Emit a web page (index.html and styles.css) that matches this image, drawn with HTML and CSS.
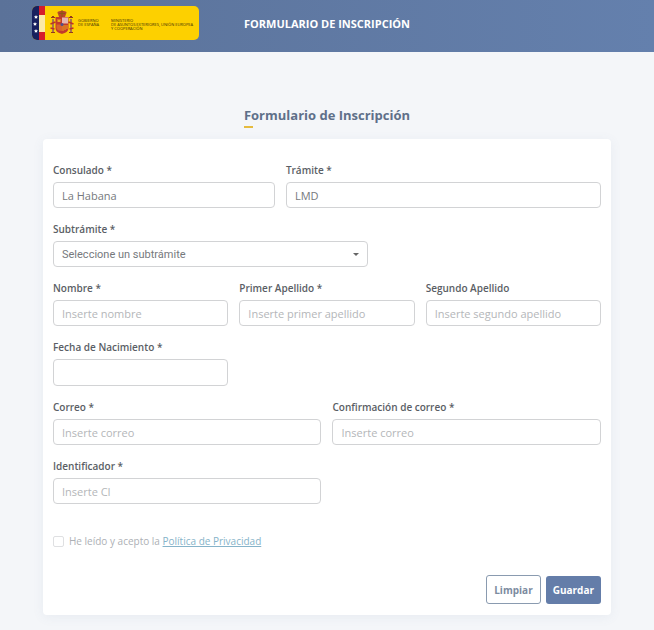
FILE: index.html
```html
<!DOCTYPE html>
<html lang="es">
<head>
    <meta charset="UTF-8">
    <meta name="viewport" content="width=device-width, initial-scale=1.0">
    <title>Formulario de Inscripción</title>
    <link rel="stylesheet" href="styles.css">
</head>

<body>
    <header class="header">
        <svg class="logo" viewBox="0 0 167 34" role="img" aria-label="Gobierno de España">
            <defs>
                <clipPath id="round"><rect width="167" height="34" rx="5"/></clipPath>
            </defs>
            <g clip-path="url(#round)">
                <rect width="167" height="34" fill="#fdd000"/>
                <rect width="7" height="34" fill="#17205e"/>
                <rect x="7" width="6" height="34" fill="#fbe9a8"/>
                <rect x="7" width="6" height="9" fill="#d51d2c"/>
                <rect x="7" y="26" width="6" height="8" fill="#d51d2c"/>
                <!-- stars -->
                <g fill="#fff">
                    <path d="M4 9l.6 1.200 1.400.2-1 1 .2 1.400L4 12.100l-1.200.7.2-1.400-1-1 1.400-.2z"/>
                    <path d="M3 16l.6 1.200 1.400.2-1 1 .2 1.400L3 19.100l-1.200.7.2-1.400-1-1 1.400-.2z"/>
                    <path d="M4 23l.6 1.200 1.400.2-1 1 .2 1.400L4 26.100l-1.200.7.2-1.400-1-1 1.400-.2z"/>
                </g>
                <!-- coat of arms -->
                <path d="M26 8c-2-3 2-3 4-3s6 0 4 3l-1 3h-6z" fill="#b9452b"/>
                <path d="M29.500 4h1v7h-1zM27 7h6v1h-6z" fill="#8a5a12"/>
                <path d="M23.500 11h13v11c0 4-4 5-6.500 6-2.500-1-6.500-2-6.500-6z" fill="#c33a2b"/>
                <path d="M30 11.500h6v6h-6z" fill="#e5b5b0"/>
                <path d="M24.500 18.500H30V25c-3 0-5.500-1-5.500-3z" fill="#d9632a"/>
                <path d="M31 19v6M33 19v5M35 19v4" stroke="#efaa20" stroke-width="1"/>
                <path d="M25.500 16v-3h1v1h1v-1h1v3z" fill="#efaa20"/>
                <circle cx="30" cy="18.500" r="1.500" fill="#4c4f8d"/>
                <path d="M20 13h2v13h-2zM38 13h2v13h-2z" fill="#a9764e"/>
                <path d="M19 12h4v-1h-1v-1h-2v1h-1zM37 12h4v-1h-1v-1h-2v1h-1zM19 26h4v1h-4zM37 26h4v1h-4z" fill="#93391c"/>
                <path d="M18.500 18l5-2M18.500 22l4 1M36.500 16l5 2M37.500 23l4-1" stroke="#bd3328" stroke-width="1.500"/>
                <g class="logo-text">
                    <text x="46" y="16">GOBIERNO</text>
                    <text x="46" y="20">DE ESPAÑA</text>
                    <text x="79" y="16">MINISTERIO</text>
                    <text x="79" y="20">DE ASUNTOS EXTERIORES, UNIÓN EUROPEA</text>
                    <text x="79" y="24">Y COOPERACIÓN</text>
                </g>
            </g>
        </svg>
        <div class="header-title">FORMULARIO DE INSCRIPCIÓN</div>
    </header>

    <main class="container">
        <h1 class="title">Formulario de Inscripción</h1>

        <form class="card">
            <div class="grid">
                <div class="field col-5">
                    <label for="consulado">Consulado *</label>
                    <input type="text" id="consulado" value="La Habana">
                </div>
                <div class="field col-7">
                    <label for="tramite">Trámite *</label>
                    <input type="text" id="tramite" value="LMD">
                </div>

                <div class="field col-7 start">
                    <label for="subtramite">Subtrámite *</label>
                    <div class="select">
                        <select id="subtramite">
                            <option>Seleccione un subtrámite</option>
                        </select>
                        <svg class="arrow" viewBox="0 0 8 4"><path d="M1 0h6L4 3z" fill="#666"/></svg>
                    </div>
                </div>

                <div class="field col-4 start">
                    <label for="nombre">Nombre *</label>
                    <input type="text" id="nombre" placeholder="Inserte nombre">
                </div>
                <div class="field col-4">
                    <label for="apellido1">Primer Apellido *</label>
                    <input type="text" id="apellido1" placeholder="Inserte primer apellido">
                </div>
                <div class="field col-4">
                    <label for="apellido2">Segundo Apellido</label>
                    <input type="text" id="apellido2" placeholder="Inserte segundo apellido">
                </div>

                <div class="field col-4 start">
                    <label for="fecha">Fecha de Nacimiento *</label>
                    <input type="text" id="fecha" class="date">
                </div>

                <div class="field col-6 start">
                    <label for="correo">Correo *</label>
                    <input type="email" id="correo" placeholder="Inserte correo">
                </div>
                <div class="field col-6">
                    <label for="correo2">Confirmación de correo *</label>
                    <input type="email" id="correo2" placeholder="Inserte correo">
                </div>

                <div class="field col-6 start">
                    <label for="ci">Identificador *</label>
                    <input type="text" id="ci" placeholder="Inserte CI">
                </div>
            </div>

            <div class="privacy">
                <input type="checkbox" id="acepto">
                <label for="acepto">He leído y acepto la <a href="#">Política de Privacidad</a></label>
            </div>

            <div class="buttons">
                <button type="reset" class="btn btn-clear">Limpiar</button>
                <button type="submit" class="btn btn-save">Guardar</button>
            </div>
        </form>
    </main>
</body>

</html>
```
FILE: styles.css
```css
* {
    margin: 0;
    padding: 0;
    box-sizing: border-box;
}

body {
    font-family: "Open Sans", "Noto Sans", sans-serif;
    font-size: 10px;
    color: #5a5e65;
    background-color: #f4f6f9;
}

.header {
    display: grid;
    grid-template-columns: 1fr auto 1fr;
    align-items: center;
    padding: 6px 32px 12px;
    background: linear-gradient(to right, #5b7299, #6480ad);
}

.logo {
    width: 167px;
    height: 34px;
}

.logo-text {
    font-family: "Open Sans", sans-serif;
    font-size: 4px;
    font-weight: 400;
    fill: #3d3208;
}

.header-title {
    font-size: 11px;
    font-weight: 700;
    color: #fff;
}

.container {
    max-width: 1140px;
    margin: 0 auto;
    padding: 53px 43px 15px;
}

.title {
    width: fit-content;
    margin: 0 auto 11px;
    font-size: 13px;
    line-height: 20px;
    font-weight: 700;
    color: #5f7089;
}

.title::after {
    content: "";
    display: block;
    width: 9px;
    height: 2px;
    margin-top: 1px;
    background-color: #e5bb3f;
}

.card {
    padding: 23px 10px 11px;
    background-color: #fff;
    border-radius: 4px;
    box-shadow: 0 2px 12px rgba(90, 110, 150, 0.08);
}

.grid {
    display: grid;
    grid-template-columns: repeat(12, 1fr);
    column-gap: 11px;
    row-gap: 13px;
}

.field label {
    display: block;
    margin-bottom: 4px;
    line-height: 16px;
    font-weight: 600;
}

.start {
    grid-column-start: 1;
}

.col-4 {
    grid-column-end: span 4;
}

.col-5 {
    grid-column-end: span 5;
}

.col-6 {
    grid-column-end: span 6;
}

.col-7 {
    grid-column-end: span 7;
}

.field input,
.field select {
    display: block;
    width: 100%;
    height: 26px;
    padding: 0 8px;
    font-family: inherit;
    font-size: 11px;
    color: #76797d;
    background-color: #fff;
    border: 1px solid #d2d3d5;
    border-radius: 4px;
}

.field .date {
    height: 27px;
}

.field input::placeholder {
    color: #b4b6b9;
}

.field select {
    appearance: none;
    font-family: Roboto, sans-serif;
}

.select {
    position: relative;
}

.arrow {
    position: absolute;
    top: 12px;
    right: 8px;
    width: 8px;
    height: 4px;
    pointer-events: none;
}

.privacy {
    display: flex;
    align-items: center;
    gap: 5px;
    margin-top: 29px;
    line-height: 16px;
    color: #adb0b5;
}

.privacy input {
    appearance: none;
    width: 11px;
    height: 11px;
    border: 1px solid #dfe0e2;
    border-radius: 2px;
}

.privacy a {
    color: #86b3c9;
}

.buttons {
    display: flex;
    justify-content: flex-end;
    align-items: center;
    gap: 5px;
    margin-top: 26px;
}

.btn {
    height: 28px;
    padding: 0 7px;
    font-family: inherit;
    font-size: 10px;
    font-weight: 700;
    border: none;
    border-radius: 3px;
}

.btn-clear {
    height: 29px;
    color: #7c8ba0;
    background-color: #fff;
    border: 1px solid #8a9bb0;
}

.btn-save {
    color: #fff;
    background-color: #647da9;
}
```
